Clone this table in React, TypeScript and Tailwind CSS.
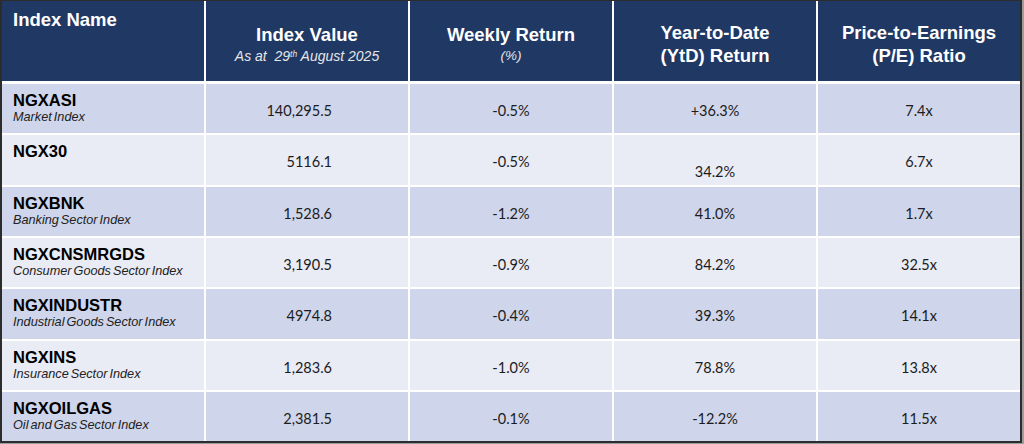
import React from "react";

type Row = {
  code: string;
  sub?: string;
  value: string;
  weekly: string;
  ytd: string;
  pe: string;
  ytdLow?: boolean;
  tall?: boolean;
};

const rows: Row[] = [
  { code: "NGXASI", sub: "Market Index", value: "140,295.5", weekly: "-0.5%", ytd: "+36.3%", pe: "7.4x" },
  { code: "NGX30", value: "5116.1", weekly: "-0.5%", ytd: "34.2%", pe: "6.7x", ytdLow: true, tall: true },
  { code: "NGXBNK", sub: "Banking Sector Index", value: "1,528.6", weekly: "-1.2%", ytd: "41.0%", pe: "1.7x" },
  { code: "NGXCNSMRGDS", sub: "Consumer Goods Sector Index", value: "3,190.5", weekly: "-0.9%", ytd: "84.2%", pe: "32.5x" },
  { code: "NGXINDUSTR", sub: "Industrial Goods Sector Index", value: "4974.8", weekly: "-0.4%", ytd: "39.3%", pe: "14.1x", tall: true },
  { code: "NGXINS", sub: "Insurance Sector Index", value: "1,283.6", weekly: "-1.0%", ytd: "78.8%", pe: "13.8x" },
  { code: "NGXOILGAS", sub: "Oil and Gas Sector Index", value: "2,381.5", weekly: "-0.1%", ytd: "-12.2%", pe: "11.5x" },
];

const arial = "font-['Liberation_Sans',Arial,sans-serif]";
const num = "font-['Lato','Open_Sans',sans-serif] text-[14.5px] text-[#1c1c1c]";

export default function App() {
  return (
    <div className="w-[1024px] h-[444px] bg-[#9c9c9c] overflow-hidden">
      <div className="w-[1022px] h-[443px] border-l-2 border-r-2 border-b-2 border-t border-[#2c2c2c] bg-white flex flex-col gap-[2px]">
        {/* Header */}
        <div className={`grid grid-cols-[202px_202px_202px_202px_202px] gap-x-[2px] h-[80px] shrink-0 mb-[1px] ${arial}`}>
          <div className="bg-[#1f3864] pl-[11px] pt-[8px] text-white font-bold text-[18.5px] leading-[22px]">
            Index Name
          </div>
          <div className="bg-[#1f3864] flex flex-col items-center justify-center pt-[8px] text-white">
            <div className="font-bold text-[18.5px] leading-[22px]">Index Value</div>
            <div className="italic text-[14px] leading-[20px] text-[#e6e6e6]">
              As at&nbsp; 29<sup className="text-[8.5px]">th</sup> August 2025
            </div>
          </div>
          <div className="bg-[#1f3864] flex flex-col items-center justify-center pt-[8px] text-white">
            <div className="font-bold text-[18.5px] leading-[22px]">Weekly Return</div>
            <div className="italic text-[13.5px] leading-[20px] text-[#e6e6e6]">(%)</div>
          </div>
          <div className="bg-[#1f3864] flex flex-col items-center justify-center pt-[6px] text-white font-bold text-[18.5px] leading-[23px] text-center">
            <div>Year-to-Date</div>
            <div>(YtD) Return</div>
          </div>
          <div className="bg-[#1f3864] flex flex-col items-center justify-center pt-[6px] text-white font-bold text-[18.5px] leading-[23px] text-center">
            <div>Price-to-Earnings</div>
            <div>(P/E) Ratio</div>
          </div>
        </div>
        {rows.map((r, i) => {
          const bg = i % 2 === 0 ? "bg-[#cfd5ea]" : "bg-[#e9ebf5]";
          return (
            <div
              key={r.code}
              className={`grid grid-cols-[202px_202px_202px_202px_202px] gap-x-[2px] shrink-0 ${r.tall ? "h-[50px]" : "h-[49px]"}`}
            >
              <div className={`${bg} pl-[11px] pt-[7px] ${arial}`}>
                <div className="font-bold text-[16.5px] leading-[18px] text-black">{r.code}</div>
                {r.sub && (
                  <div className="italic text-[12.7px] leading-[16px] text-[#222] [word-spacing:-1.5px]">
                    {r.sub}
                  </div>
                )}
              </div>
              <div className={`${bg} flex items-center justify-end pr-[76px] pt-[4px] ${num}`}>{r.value}</div>
              <div className={`${bg} flex items-center justify-center pt-[4px] ${num}`}>{r.weekly}</div>
              <div className={`${bg} flex items-center justify-center ${r.ytdLow ? "pt-[24px]" : "pt-[4px]"} ${num}`}>
                {r.ytd}
              </div>
              <div className={`${bg} flex items-center justify-center pt-[4px] ${num}`}>{r.pe}</div>
            </div>
          );
        })}
      </div>
    </div>
  );
}
